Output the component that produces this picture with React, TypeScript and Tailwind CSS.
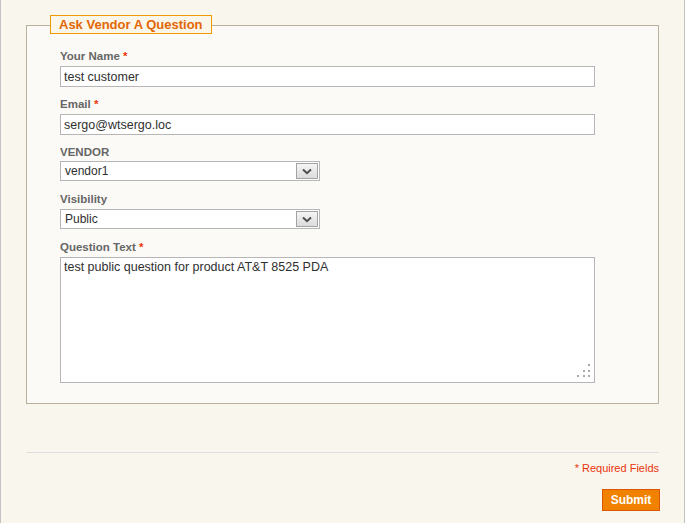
import React from "react";

function Label({ text, required }: { text: string; required?: boolean }) {
  return (
    <div className="h-[15px] leading-[15px] text-[11.5px] font-bold text-[#666666]">
      {text}
      {required && <span className="text-[#eb340a]"> *</span>}
    </div>
  );
}

function SelectBox({ value, className }: { value: string; className: string }) {
  return (
    <div
      role="combobox"
      aria-expanded="false"
      className={`relative w-[260px] h-[20px] border border-[#b6b6b6] bg-white flex items-center pl-[4px] text-[12px] text-[#2f2f2f] ${className}`}
    >
      {value}
      <div className="pointer-events-none absolute right-[1px] top-[1px] w-[22px] h-[16px] border border-[#a3a3a3] bg-gradient-to-b from-[#f4f4f4] to-[#dcdcdc] flex items-center justify-center">
        <svg width="10" height="7" viewBox="0 0 10 7">
          <path d="M1 1.5 L5 5.2 L9 1.5" fill="none" stroke="#4f4f4f" strokeWidth="2" />
        </svg>
      </div>
    </div>
  );
}

export default function App() {
  return (
    <div className="w-[685px] h-[523px] bg-[#f9f6ee] border-x border-[#c2c2c2] pl-[25px] pt-[25px] font-['Liberation_Sans',Arial,sans-serif]">
      <div className="relative w-[633px] border border-[#bbafa0] bg-[#fbfaf6] pl-[33px] pt-[23px] pb-[20px]">
        <div className="absolute left-[23px] top-[-11px] h-[19px] border border-[#f19900] bg-[#faf6ea] px-[8px] leading-[17px] text-[13px] font-bold text-[#e26703]">
          Ask Vendor A Question
        </div>

        <Label text="Your Name" required />
        <input
          className="mt-[2px] block w-[535px] h-[21px] border border-[#b6b6b6] bg-white px-[3px] text-[12.5px] text-[#2f2f2f] outline-none"
          defaultValue="test customer"
        />

        <div className="mt-[10px]">
          <Label text="Email" required />
        </div>
        <input
          className="mt-[2px] block w-[535px] h-[21px] border border-[#b6b6b6] bg-white px-[3px] text-[12.5px] text-[#2f2f2f] outline-none"
          defaultValue="sergo@wtsergo.loc"
        />

        <div className="mt-[10px]">
          <Label text="VENDOR" />
        </div>
        <SelectBox value="vendor1" className="mt-[1px]" />

        <div className="mt-[11px]">
          <Label text="Visibility" />
        </div>
        <SelectBox value="Public" className="mt-[2px]" />

        <div className="mt-[11px]">
          <Label text="Question Text" required />
        </div>
        <div className="relative mt-[2px] w-[535px] h-[126px]">
          <textarea
            className="block w-full h-full resize-none border border-[#b6b6b6] bg-white px-[3px] pt-[2px] text-[12.5px] leading-[15px] text-[#2f2f2f] outline-none"
            defaultValue="test public question for product AT&T 8525 PDA"
          />
          <svg
            className="pointer-events-none absolute left-[517px] top-[107px]"
            width="14"
            height="14"
            viewBox="0 0 14 14"
            shapeRendering="crispEdges"
          >
            <rect x="11" y="0" width="2" height="2" fill="#aaaaaa" />
            <rect x="6" y="6" width="2" height="2" fill="#aaaaaa" />
            <rect x="11" y="6" width="2" height="2" fill="#aaaaaa" />
            <rect x="0" y="11" width="2" height="2" fill="#aaaaaa" />
            <rect x="6" y="11" width="2" height="2" fill="#aaaaaa" />
            <rect x="11" y="11" width="2" height="2" fill="#aaaaaa" />
          </svg>
        </div>
      </div>

      <div className="mt-[48px] w-[633px] border-t border-[#dedede]">
        <div className="mt-[9px] h-[13px] leading-[13px] text-right text-[11px] text-[#eb340a]">
          * Required Fields
        </div>
        <div className="mt-[14px] flex justify-end -mr-px">
          <button className="w-[58px] h-[22px] border border-[#de5400] bg-[#f18200] text-white text-[12px] font-bold leading-[20px]">
            Submit
          </button>
        </div>
      </div>
    </div>
  );
}
